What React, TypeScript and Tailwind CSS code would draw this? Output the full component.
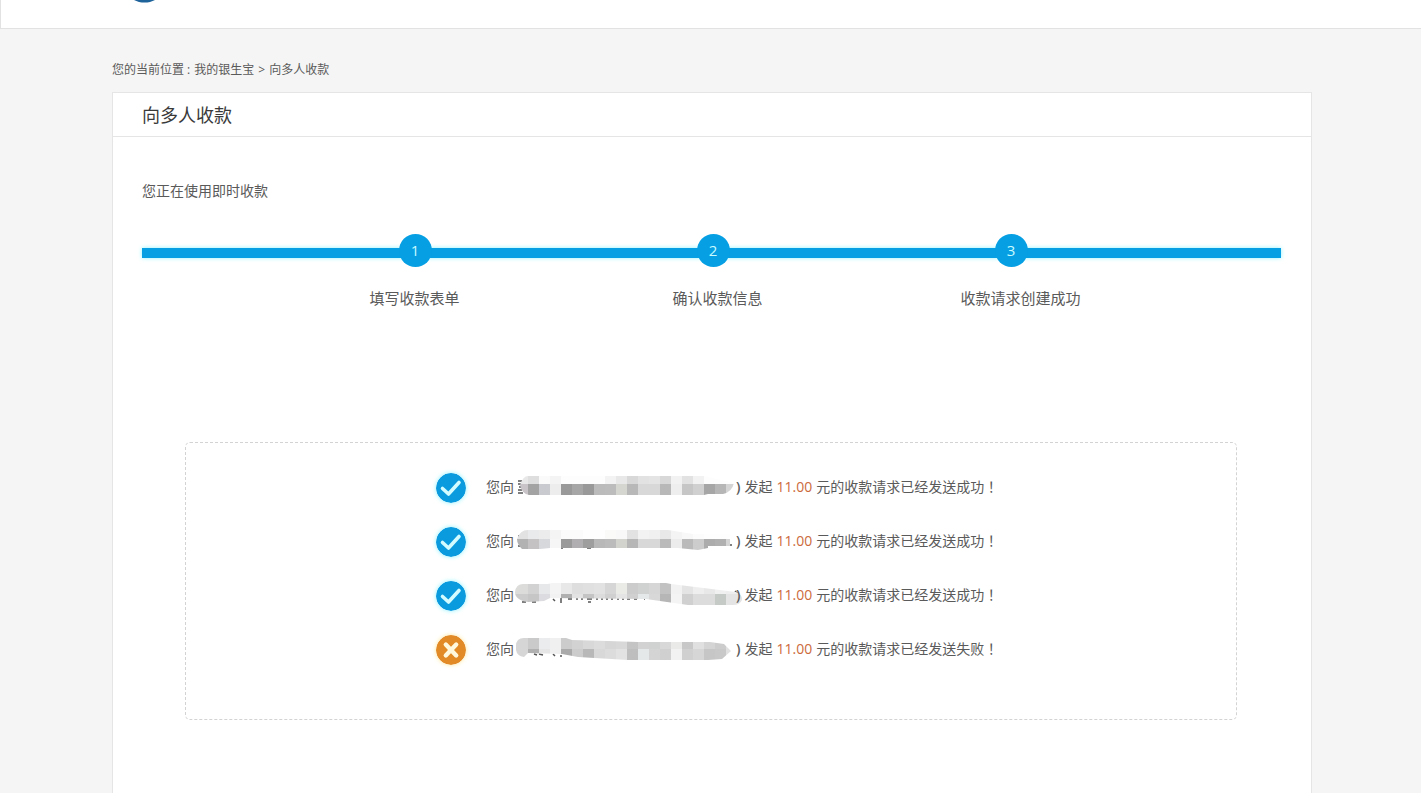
import React from "react";

type Mask = {
  outline: string;
  split: number;
  top: string[];
  bottom: string[];
  marks: string;
};

type Result = {
  ok: boolean;
  amount: string;
  mask: Mask;
};

const steps = ["填写收款表单", "确认收款信息", "收款请求创建成功"];

const results: Result[] = [
  {
    ok: true,
    amount: "11.00",
    mask: {
      outline: "M2 13Q5 4 10 4H186L216 11Q214 20 205 22H190L186 23H11Q4 22 2 13Z",
      split: 12,
      top: ["e8e8e8", "dedede", "fafafa", "f4f4f4", "fdfdfd", "fdfdfd", "fdfdfd", "fdfdfd", "f3f3f3", "e8e8e8", "d8d8d8", "e2e2e2", "e4e4e4", "d8d8d8", "f2f2f2", "e2e2e2", "f2f2f2", "fdfdfd", "fdfdfd", "fdfdfd", "fdfdfd"],
      bottom: ["c9c4c8", "a4a3a3", "c9cad0", "ededed", "999999", "a6a6a6", "999999", "bbbbbb", "bcbcbc", "d6d6d0", "b8b8b8", "d8d8d8", "d8d8d8", "b8b8b8", "eeeeee", "c6c6c6", "d0d0d0", "a6a6a6", "b6b6b6", "d4d4d4", "e4e4e4"],
      marks: "M0 9h4M0 12h3M1 15h3M0 18h4M0 21h5",
    },
  },
  {
    ok: true,
    amount: "11.00",
    mask: {
      outline: "M-1 13Q2 4 10 4H150L175 8H212V20H190V22L180 24L170 23L160 22H32L22 23H4Q-1 18-1 13Z",
      split: 13,
      top: ["e2e2e2", "e9eaec", "ececec", "f4f4f4", "fbfbfb", "fbfbfb", "fefefe", "fefefe", "fafaf8", "f8f8f8", "e2e2e2", "f2f2f2", "f0f0f0", "e8e8e8", "f4f4f4", "f8f8f8", "fcfcfc", "fefefe", "fefefe", "fefefe", "fefefe"],
      bottom: ["b2b2b2", "c4c2c2", "d6d8dc", "f6f6f6", "9a9a9a", "b0aeb0", "9e9e9e", "b8b8b8", "bbbbbb", "d2d3cd", "b6b6b6", "d8d8d8", "d8d8d8", "bababa", "ececec", "bababa", "cccccc", "acacac", "b0b0b0", "d4d4d4", "e4e4e4"],
      marks: "M0 10h2M0 15h3M0 20h4M43 22h2M69 22h4M212 19h2",
    },
  },
  {
    ok: true,
    amount: "11.00",
    mask: {
      outline: "M-3 12Q-2 4 5 4H30L34 3H148L153 4L218 12Q225 15 224 20Q222 25 215 25H170L142 21L128 19L32 18L26 21L10 22Q-3 20-3 12Z",
      split: 14,
      top: ["dcdcda", "d2d2d2", "e6e8ea", "f4f4f4", "e8e8e8", "dedede", "e0e0e0", "e2e2e2", "d6d6d6", "eaeae6", "cccccc", "d0d2d2", "d6d6d6", "c2c2c2", "f2f2f2", "e4e4e4", "eeeeee", "e8e8e8", "f0f0f0", "eeeeee", "eeeeee"],
      bottom: ["cccccc", "c6c6c6", "dcdce0", "f2f2f2", "b0b0b0", "e2e2e2", "c4c4c4", "dcdcdc", "d0d0d0", "e4e4e4", "d0d0d0", "e4e8e8", "d8d8d8", "b6b6b6", "f4f4f4", "d0d0d0", "dcdcdc", "dcdcdc", "c6cac6", "e4e4e4", "e4e4e4"],
      marks: "M4 22h4M14 22h4M35 19l2 2M43 18v5M50 19h4M58 19h2M63 19h2M69 19h5M70 22h3M78 19h2M83 19h2M88 19h2M93 19h2M99 19h2M104 19h2M109 19h3M116 19h3M126 19h1M217 11l3 3",
    },
  },
  {
    ok: false,
    amount: "11.00",
    mask: {
      outline: "M-2 12Q-2 4 6 4H22L26 4H48L54 6L90 7L120 8H192L206 10L213 17L204 25L190 26H110L60 23L44 20L10 19L6 23Q-1 22-2 16Z",
      split: 15,
      top: ["d6d6d6", "cacaca", "eaecee", "f0f0f0", "cccccc", "d2d2d2", "d8d8d8", "dcdcdc", "d6d6d6", "d8d8d8", "c4c4c4", "d2d2d2", "d0d2d2", "d8d8d8", "eaeae8", "c8c8c8", "e0e0e0", "d4d4d4", "cccccc", "e0e0e0", "e0e0e0"],
      bottom: ["d6d6d6", "b0b0b0", "e6e6e6", "f0f0f0", "aaaaaa", "cccccc", "b8b8b8", "d8d8d8", "dcdcdc", "e2e2e2", "bebebe", "e4e8e8", "d4d4d4", "d0d0d0", "f2f2f2", "d0d0d0", "d6d6d6", "c6c6c6", "c8c8c8", "e0e0e0", "e0e0e0"],
      marks: "M16 20l3 1M21 20l4 1M35 20l2 2M43 21v2",
    },
  },
];

function MaskedName({ mask, id }: { mask: Mask; id: string }) {
  return (
    <svg viewBox="0 0 218 30" className="h-[30px] w-[218px] shrink-0 overflow-visible" aria-hidden="true">
      <clipPath id={id}>
        <path d={mask.outline} />
      </clipPath>
      <path d={mask.marks} stroke="#555" strokeWidth="1.5" fill="none" />
      <g clipPath={`url(#${id})`} shapeRendering="crispEdges">
        {mask.top.map((c, i) => (
          <rect key={i} x={i * 11 - (i ? 1 : 5)} y="0" width={i ? 11 : 15} height={mask.split} fill={`#${c}`} />
        ))}
        {mask.bottom.map((c, i) => (
          <rect key={i} x={i * 11 - (i ? 1 : 5)} y={mask.split} width={i ? 11 : 15} height="18" fill={`#${c}`} />
        ))}
      </g>
    </svg>
  );
}

function StatusIcon({ ok }: { ok: boolean }) {
  return ok ? (
    <svg viewBox="0 0 30 30" className="size-[30px] shrink-0 rounded-full shadow-[0_0_4px_#8ff3ff]" aria-hidden="true">
      <circle cx="15" cy="15" r="15" fill="#0a9bdf" />
      <path d="M6.5 15.5L12.5 21L23 9.5" fill="none" stroke="#d2fcff" strokeWidth="3.6" strokeLinecap="round" strokeLinejoin="round" />
    </svg>
  ) : (
    <svg viewBox="0 0 30 30" className="size-[30px] shrink-0 rounded-full shadow-[0_0_4px_#ffe79a]" aria-hidden="true">
      <circle cx="15" cy="15" r="15" fill="#e28a26" />
      <path d="M9.8 9.5L20.2 20.5M20.2 9.5L9.8 20.5" fill="none" stroke="#fff8dc" strokeWidth="4.4" strokeLinecap="round" />
    </svg>
  );
}

export default function App() {
  return (
    <div className="flex h-screen min-h-0 flex-col overflow-hidden bg-[#f5f5f5] font-['Open_Sans','Noto_Sans_CJK_SC',sans-serif] text-[#5a5a5a]">
      <header className="h-[29px] shrink-0 overflow-hidden border-b border-l border-[#e2e2e2] bg-white">
        <div className="mx-auto max-w-[1200px]">
          <svg viewBox="0 0 30 4" className="ml-[22px] h-1 w-[30px]" aria-hidden="true">
            <path d="M1 0C7 3.4 16 3.4 22 0Z" fill="#1f639b" />
          </svg>
        </div>
      </header>

      <div className="flex flex-1 flex-col pl-[3px]">
        <main className="mx-auto flex w-full max-w-[1200px] flex-1 flex-col">
          <nav className="flex h-[63px] items-center gap-1 pt-[18px] text-xs">
            <span>您的当前位置 :</span>
            <a href="#home">我的银生宝</a>
            <span>&gt;</span>
            <a href="#collect">向多人收款</a>
          </nav>

          <section className="flex-1 border border-b-0 border-[#e5e5e5] bg-white">
            <h1 className="flex h-11 items-center border-b border-[#e5e5e5] px-[29px] text-lg text-[#3a3a3a]">
              向多人收款
            </h1>
            <div className="pl-[29px] pr-[30px] pt-11">
              <p className="text-sm leading-5">您正在使用即时收款</p>

              <div className="relative mt-[33px]">
                <div className="absolute inset-x-0 top-[14px] h-[10px] bg-[#069fe3] shadow-[0_0_4px_#8ff3ff]" />
                <ol className="relative ml-[124px] grid max-w-[894px] grid-cols-3 justify-items-center text-[15px] font-medium text-[#c8fbff]">
                  {steps.map((s, i) => (
                    <li key={s} className="flex size-[33px] items-center justify-center rounded-full bg-[#069fe3]">
                      {i + 1}
                    </li>
                  ))}
                </ol>
              </div>
              <ul className="ml-[121px] mt-[19px] grid max-w-[909px] grid-cols-3 text-center text-[15px] leading-6">
                {steps.map((s) => (
                  <li key={s}>{s}</li>
                ))}
              </ul>

              <ul className="ml-[43px] mr-11 mt-[132px] flex h-[278px] flex-col gap-6 rounded-[5px] border border-dashed border-[#d3d3d3] pl-[250px] pt-[30px]">
                {results.map((r, i) => (
                  <li key={i} className="flex h-[30px] items-center gap-5">
                    <StatusIcon ok={r.ok} />
                    <p className="flex items-center gap-1 whitespace-nowrap pb-[2px] text-sm">
                      <span>您向</span>
                      <span className="flex items-center">
                        <MaskedName mask={r.mask} id={`mask-${i}`} />
                        <b className="font-semibold">)</b>
                      </span>
                      <span>发起</span>
                      <span className="text-[#cc6a3c]">{r.amount}</span>
                      <span>
                        元的收款请求已经发送{r.ok ? "成功" : "失败"}
                        <span className="font-['Noto_Sans_CJK_TC',sans-serif] leading-none" lang="zh-Hant">！</span>
                      </span>
                    </p>
                  </li>
                ))}
              </ul>
            </div>
          </section>
        </main>
      </div>
    </div>
  );
}
